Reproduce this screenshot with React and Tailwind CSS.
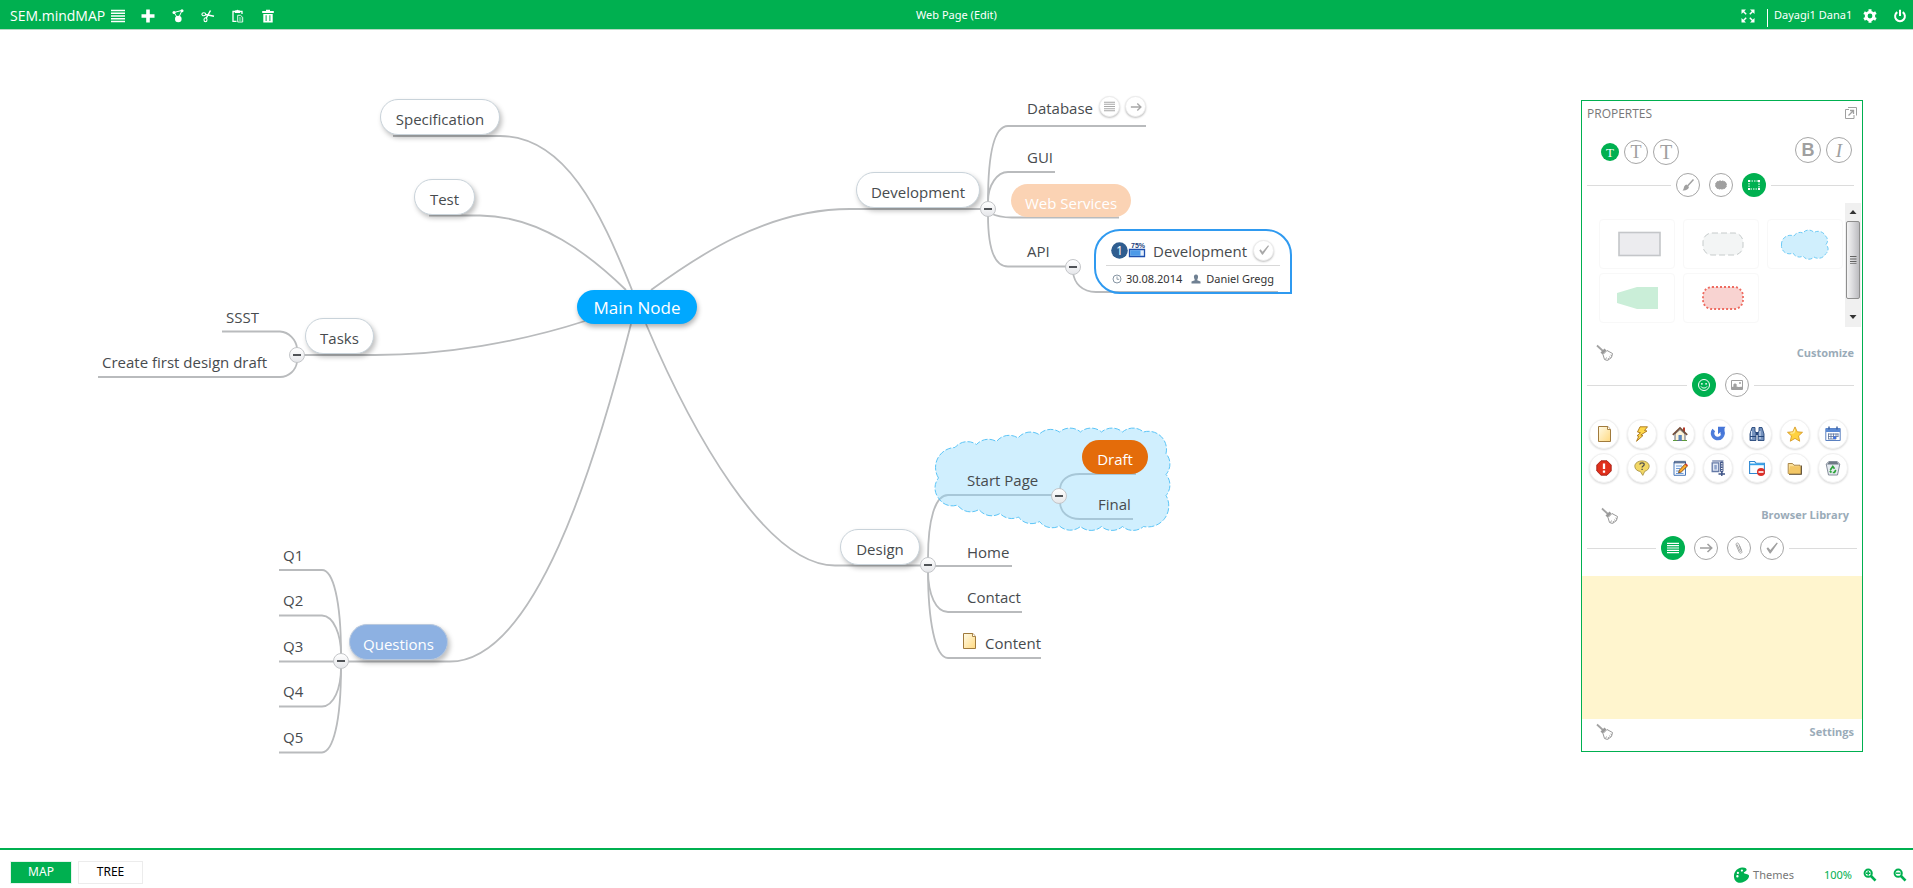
import React from "react";

const HEADER = 30;

/* ---------- map data ---------- */

const links = [
  "M393 136H500C565 136 600 210 632 290",
  "M429 215.500H480C540 216 590 255 626 290",
  "M651 290C695 258 765 209 850 209H988",
  "M585 321C520 342 445 355 375 355H297",
  "M631 324C595 465 535 661.500 450 661.500H279",
  "M646 324C690 428 765 565.500 835 565.500H928",
  "M988 202C988 150 995 126 1008 126H1146",
  "M988 202C988 185 997 172 1008 172H1055",
  "M990 213C998 217 1005 217.500 1012 217.500H1119",
  "M988 215C988 250 995 266.500 1008 266.500H1073",
  "M1073 272C1074 283 1082 292 1096 292H1278",
  "M928 558C928 520 935 495 948 495H1059",
  "M928 566H1012",
  "M928 570C928 595 936 612 948 612H1022",
  "M928 570C928 620 935 658 948 658H1041",
  "M1060 490C1060 480 1068 474 1080 474H1136",
  "M1060 502C1060 512 1068 519 1080 519H1133",
  "M222 331.500H280C289 332 296 340 297 348",
  "M98 377H280C289 377 296 370 297 362",
  "M279 570H322C333 570 341 600 341 654",
  "M279 615.500H322C334 616 341 635 341 654",
  "M279 706.500H322C334 706 341 688 341 668",
  "M279 752.500H322C333 752 341 722 341 668",
];

const cloud =
  "M938.500 478A20 20 0 0 1 955 447.500A16 16 0 0 1 976.500 444.500A16 16 0 0 1 996.500 441.500A16 16 0 0 1 1018 438A16 16 0 0 1 1039 434.500A16 16 0 0 1 1059.500 432A16 16 0 0 1 1080.500 432A16 16 0 0 1 1101.500 432A16 16 0 0 1 1122.500 432A16 16 0 0 1 1143.500 432A18 18 0 0 1 1166 453.500A16 16 0 0 1 1166 474.500A16 16 0 0 1 1166 495.500A21 21 0 0 1 1143.500 526.500A16 16 0 0 1 1122.500 526.500A16 16 0 0 1 1101.500 526.500A16 16 0 0 1 1080.500 526.500A16 16 0 0 1 1059.500 526A16 16 0 0 1 1039.500 521.500A16 16 0 0 1 1018.500 517A16 16 0 0 1 1000 513.500A16 16 0 0 1 979 509.500A16 16 0 0 1 957.500 505A16 16 0 0 1 938.500 498A16 16 0 0 1 938.500 478Z";

const pills = [
  { t: "Specification", x: 380, y: 99, w: 120, k: "white" },
  { t: "Test", x: 414, y: 179, w: 61, k: "white" },
  { t: "Tasks", x: 305, y: 318, w: 69, k: "white" },
  { t: "Development", x: 856, y: 172, w: 124, k: "white" },
  { t: "Design", x: 840, y: 529, w: 80, k: "white" },
  { t: "Questions", x: 349, y: 624, w: 99, k: "blue" },
  { t: "Main Node", x: 577, y: 290, w: 120, k: "main" },
  { t: "Web Services", x: 1011, y: 184, w: 120, k: "peach" },
  { t: "Draft", x: 1082, y: 440, w: 66, k: "orange" },
];

const pillStyles = {
  white:
    "h-[36px] pt-1 bg-white text-[#474b4e] border border-[#c9d3da] shadow-[2px_3px_5px_rgba(0,0,0,0.25)] text-[15px]",
  blue: "h-[36px] pt-1 bg-[#8db1e2] text-white border border-[#b9c9de] shadow-[2px_3px_5px_rgba(0,0,0,0.25)] text-[15px]",
  main: "h-[34px] pt-[2px] bg-[#00a8ff] text-white shadow-[1px_3px_5px_rgba(0,0,0,0.3)] text-[17px]",
  peach: "h-[33px] pt-[6px] bg-[#fbd3b4] text-white text-[15px]",
  orange: "h-[34px] pt-1 bg-[#e46c0a] text-white text-[15px]",
};

const labels = [
  { t: "Database", x: 1027, y: 108 },
  { t: "GUI", x: 1027, y: 157 },
  { t: "API", x: 1027, y: 251 },
  { t: "Start Page", x: 967, y: 480 },
  { t: "Final", x: 1098, y: 504 },
  { t: "Home", x: 967, y: 552 },
  { t: "Contact", x: 967, y: 597 },
  { t: "Content", x: 985, y: 643 },
  { t: "SSST", x: 226, y: 317 },
  { t: "Create first design draft", x: 102, y: 362 },
  { t: "Q1", x: 283, y: 555 },
  { t: "Q2", x: 283, y: 600 },
  { t: "Q3", x: 283, y: 646 },
  { t: "Q4", x: 283, y: 691 },
  { t: "Q5", x: 283, y: 737 },
];

const toggles = [
  { n: "Development", x: 988, y: 209 },
  { n: "API", x: 1073, y: 267 },
  { n: "Design", x: 928, y: 565 },
  { n: "Start Page", x: 1059, y: 496 },
  { n: "Tasks", x: 297, y: 355 },
  { n: "Questions", x: 341, y: 661 },
];

/* ---------- simple icons ---------- */

function Svg({ s = 16, box = 16, children }) {
  return (
    <svg width={s} height={s} viewBox={`0 0 ${box} ${box}`} fill="none" aria-hidden="true" className="block shrink-0">
      {children}
    </svg>
  );
}

const Lines = ({ s = 14 }) => (
  <Svg s={s} box={14}>
    <path d="M0 1.500H14M0 4.200H14M0 7H14M0 9.800H14M0 12.500H14" stroke="currentColor" strokeWidth="1.400" />
  </Svg>
);
const Arrow = ({ s = 14 }) => (
  <Svg s={s} box={14}>
    <path d="M1 7H12.500M8.500 3L12.700 7L8.500 11" stroke="currentColor" strokeWidth="1.600" />
  </Svg>
);
const Check = ({ s = 14 }) => (
  <Svg s={s} box={14}>
    <path d="M1.500 7.500L3 6.200L5.300 9L11.800 1.500L12.800 2.200L5.600 12.500H4.800Z" fill="currentColor" />
  </Svg>
);
const PlusIcon = () => (
  <Svg s={14} box={14}>
    <path d="M5.200 0.500H8.800V5.200H13.500V8.800H8.800V13.500H5.200V8.800H0.500V5.200H5.200Z" fill="currentColor" />
  </Svg>
);
const Branch = () => (
  <Svg s={14} box={14}>
    <path d="M3 3.500L7 9.500M3 3.500L10.500 1.500" stroke="currentColor" strokeWidth="1" />
    <circle cx="3" cy="3.500" r="1.500" fill="currentColor" />
    <circle cx="11" cy="1.700" r="1.500" fill="currentColor" />
    <circle cx="7.300" cy="10" r="3.300" fill="currentColor" />
    <path d="M8 8L10.800 2" stroke="currentColor" strokeWidth="1" />
  </Svg>
);
const Scissors = () => (
  <Svg s={14} box={14}>
    <path d="M4.500 5.500L13 7.200M5 9.500L9.500 1.500" stroke="currentColor" strokeWidth="1.500" />
    <ellipse cx="2.800" cy="5.300" rx="1.900" ry="1.500" stroke="currentColor" strokeWidth="1.100" />
    <ellipse cx="4.500" cy="10.800" rx="1.500" ry="2" stroke="currentColor" strokeWidth="1.100" />
  </Svg>
);
const Paste = () => (
  <Svg s={14} box={14}>
    <path d="M5.500 12.300H2V2.500H11V5" stroke="currentColor" strokeWidth="1.300" />
    <path d="M4 1.500H5.300A1.300 1.300 0 0 1 7.700 1.500H9V4H4Z" fill="currentColor" />
    <path d="M6.700 6.300H9.500L11.700 8.300V13H6.700Z" stroke="currentColor" strokeWidth="0.900" />
    <path d="M8 9H10.500M8 11H10.500" stroke="currentColor" strokeWidth="0.700" />
  </Svg>
);
const Trash = () => (
  <Svg s={14} box={14}>
    <path d="M1.200 2H5V0.800H9V2H12.800V4H1.200Z" fill="currentColor" />
    <path fillRule="evenodd" d="M2.300 5H11.700V13.500H2.300ZM4.600 6.300V12H5.600V6.300ZM8.400 6.300V12H9.400V6.300Z" fill="currentColor" />
  </Svg>
);
const Expand = () => (
  <Svg s={14} box={14}>
    <path d="M0.500 0.500H5L0.500 5ZM13.500 0.500V5L9 0.500ZM0.500 13.500V9L5 13.500ZM13.500 13.500H9L13.500 9Z" fill="currentColor" />
    <path d="M2 2L5.200 5.200M12 2L8.800 5.200M2 12L5.200 8.800M12 12L8.800 8.800" stroke="currentColor" strokeWidth="1.500" />
  </Svg>
);
const Gear = () => (
  <Svg s={14} box={14}>
    <circle cx="7" cy="7" r="3.800" stroke="currentColor" strokeWidth="2.800" />
    <path
      d="M7 0.200V2.400M7 11.600V13.800M1.100 3.600L3 4.700M11 9.300L12.900 10.400M1.100 10.400L3 9.300M11 4.700L12.900 3.600"
      stroke="currentColor"
      strokeWidth="3"
    />
  </Svg>
);
const Power = () => (
  <Svg s={14} box={14}>
    <path d="M4.300 3.200A4.900 4.900 0 1 0 9.700 3.200M7 0.800V7" stroke="currentColor" strokeWidth="2" />
  </Svg>
);
const Broom = () => (
  <Svg s={18} box={18}>
    <path d="M1 1.500L8 8" stroke="#a3a3a3" strokeWidth="1.800" />
    <path d="M4.500 8.500L8.500 4.500L10.500 6.500L6.500 10.500Z" fill="#999" />
    <path d="M7 10.500L11 6.500L16.500 9.500L15.500 13.500L11.500 16.500L8.500 15.500Z" stroke="#999" strokeWidth="1" />
    <path d="M9.500 15.500L10.500 13.500M12 16L12.500 14M14.500 14.200L13.500 12.500M16 12L14.500 11" stroke="#999" strokeWidth="0.900" />
  </Svg>
);
const Palette = () => (
  <Svg s={18} box={18}>
    <path
      fillRule="evenodd"
      d="M2 9C2.500 5 6 1.800 10 1.500C13 1.200 15.200 2.500 14.600 4.200C14 5.600 11.600 5.800 11.800 7C12 8.200 16.500 7.500 17 9.600C17.500 12.600 13.500 16.500 8.500 16.800C4 17 1.500 13.600 2 9ZM4.200 10.300A1.200 1.200 0 1 0 6.600 10.300A1.200 1.200 0 1 0 4.200 10.300ZM4.800 6.900A1.100 1.100 0 1 0 7 6.900A1.100 1.100 0 1 0 4.800 6.900ZM8.800 4.600A1.100 1.100 0 1 0 11 4.600A1.100 1.100 0 1 0 8.800 4.600Z"
      fill="currentColor"
    />
  </Svg>
);
const Zoom = ({ plus }) => (
  <Svg s={14} box={14}>
    <circle cx="5.200" cy="5.200" r="3.600" stroke="currentColor" strokeWidth="2" />
    <path d="M8 8L12.500 12.700" stroke="currentColor" strokeWidth="2.600" />
    <path d={plus ? "M3 5.200H7.400M5.200 3V7.400" : "M3 5.200H7.400"} stroke="currentColor" strokeWidth="1.400" />
  </Svg>
);
const Doc = () => (
  <Svg>
    <defs>
      <linearGradient id="docFill" x1="0" y1="0" x2="1" y2="1">
        <stop offset="0" stopColor="#fffbe8" />
        <stop offset="1" stopColor="#ffd980" />
      </linearGradient>
    </defs>
    <path d="M2.500 0.500H12L14.500 3.500V15.500H2.500Z" fill="url(#docFill)" stroke="#a07a3c" />
    <path d="M11.500 0.500V3.500H14.500" fill="#fff" stroke="#a07a3c" strokeWidth="0.900" />
  </Svg>
);

/* ---------- icon library ---------- */

const library = [
  ["Document", <Doc />],
  [
    "Lightning",
    <Svg>
      <path d="M6 0.800L13.500 0.800L10.500 4.500L13 5L6.800 9L9 9.500L2.500 15.300L4.800 10.200L3 9.800L6.500 6.800L3.500 6Z" fill="#ffd84a" stroke="#a8741a" strokeWidth="0.900" />
    </Svg>,
  ],
  [
    "Home",
    <Svg>
      <path d="M11 1.500H13V6H11Z" fill="#b33a2a" />
      <path d="M3 8L8 3.500L13 8V14.500H3Z" fill="#fff4d8" stroke="#4f5a70" strokeWidth="0.900" />
      <path d="M0.800 8.800L8 2L15.200 8.800" stroke="#76503a" strokeWidth="1.700" />
      <path d="M6.500 9H9.800V14.500H6.500Z" fill="#5c86bd" />
      <path d="M10 14.500H15M1 14.500H5" stroke="#5d9b3c" strokeWidth="1.200" />
    </Svg>,
  ],
  [
    "Redo",
    <Svg>
      <path d="M3.800 4A5.200 5.200 0 1 0 12.800 6" stroke="#4d7ddb" strokeWidth="3.500" />
      <path d="M8 0.800H15.500L14.500 2.300V8.500H10.500V6L8 8.200V3.500Z" fill="#4676d8" />
    </Svg>,
  ],
  [
    "Find",
    <Svg>
      <path d="M3 1.500H6V5L7 7.500V14.500H1V8Z" fill="#7592bd" stroke="#26477c" strokeWidth="0.900" />
      <path d="M10 1.500H13L15 8V14.500H9V7.500L10 5Z" fill="#7592bd" stroke="#26477c" strokeWidth="0.900" />
      <path d="M7 6H9V9H7Z" fill="#26477c" />
      <path d="M2.500 5V13M11 5V13" stroke="#d4e2f5" strokeWidth="1.100" />
      <path d="M1 10.500H7M9 10.500H15" stroke="#26477c" />
    </Svg>,
  ],
  [
    "Star",
    <Svg>
      <path d="M8 0.900L10.200 5.800L15.500 6.300L11.500 9.900L12.700 15.200L8 12.400L3.300 15.200L4.500 9.900L0.500 6.300L5.800 5.800Z" fill="#ffd23f" stroke="#d89c28" strokeWidth="0.900" />
      <path d="M7.800 3.500L6.800 6.800L3.500 7.200" stroke="#fff0a8" strokeWidth="1.200" />
    </Svg>,
  ],
  [
    "Calendar",
    <Svg>
      <path d="M0.800 2.500H15.200V14.500H0.800Z" fill="#fff" stroke="#5a80c0" strokeWidth="1" />
      <path d="M1 2.500H15V6H1Z" fill="#5b8ad4" />
      <path d="M4 0.500V3.500M12 0.500V3.500" stroke="#3a5f9e" strokeWidth="1.400" />
      <path d="M3 8H13.500M3 10.500H13.500M3 13H11M3.500 7.500V13M6 7.500V13M8.500 7.500V13M11 7.500V13M13 7.500V10.500" stroke="#59719c" strokeWidth="0.800" />
      <path d="M8.500 10.500H11V13H8.500Z" fill="#3f73e6" />
    </Svg>,
  ],
  [
    "Alert",
    <Svg>
      <path d="M5 0.800H11L15.200 5V11L11 15.200H5L0.800 11V5Z" fill="#e0301c" stroke="#a31f14" strokeWidth="0.900" />
      <path d="M8 3.500V9M8 10.500V12.700" stroke="#fff" strokeWidth="2.300" />
    </Svg>,
  ],
  [
    "Question",
    <Svg>
      <path d="M8 0.900C12 0.900 15.200 3.200 15.200 6.200C15.200 9 12.800 10.800 10.800 11.300L8.800 15.400L6.300 11.500C3 11 0.800 9 0.800 6.200C0.800 3.200 4 0.900 8 0.900Z" fill="#f2d765" stroke="#a18a3c" strokeWidth="0.800" />
      <path d="M5.800 4.500C6 2.200 10.300 2.200 10.200 4.600C10.200 6 8.100 6.100 8.100 7.600M8.100 8.700V10" stroke="#4d4d4d" strokeWidth="1.300" />
    </Svg>,
  ],
  [
    "Notepad",
    <Svg>
      <path d="M2 2H13.500V15.300H2Z" fill="#f4f9ff" stroke="#4b78b8" />
      <path d="M3 0.800V3.500M5 0.800V3.500M7 0.800V3.500M9 0.800V3.500M11 0.800V3.500M13 0.800V3.500" stroke="#22365c" strokeWidth="1" />
      <path d="M4 6H10M4 8.500H8M4 11H7M4 13.500H11.500" stroke="#6f9cd8" />
      <path d="M6.500 12.800L7.500 10L13 4.200L15.300 6.200L9.300 12Z" fill="#ffae2b" stroke="#7a4715" strokeWidth="0.900" />
      <path d="M13 4.200L14 3.200L16 5.200L15.300 6.200Z" fill="#e33c2e" />
    </Svg>,
  ],
  [
    "Archive",
    <Svg>
      <path d="M2.200 2.800H8.800V11.500H2.200Z" fill="#dfe6f3" stroke="#6479a6" strokeWidth="1.300" />
      <path d="M2.200 1H13.500" stroke="#6479a6" strokeWidth="1.200" />
      <path d="M4.300 5H6.800V9.500H4.300Z" fill="#8ea3cb" />
      <path d="M10.500 2V11.500H13V2Z" fill="#fff" stroke="#3e5487" strokeWidth="0.900" />
      <path d="M11.800 2V14" stroke="#3e5487" strokeWidth="1.800" strokeDasharray="1.300 1" />
      <path d="M8.500 14H15M11.800 12V16" stroke="#3e5487" strokeWidth="1.400" />
    </Svg>,
  ],
  [
    "Remove folder",
    <Svg>
      <path d="M0.600 13.500V1.500H5.500L7 3.200H15.400V13.500Z" fill="#fafdff" stroke="#2f86d0" strokeWidth="1.100" />
      <path d="M0.600 3.500H15.400V5.200H0.600Z" fill="#33a0e8" />
      <circle cx="12" cy="12" r="4" fill="#dd2f28" />
      <path d="M9.500 12H14.500" stroke="#fff" strokeWidth="1.600" />
    </Svg>,
  ],
  [
    "Folder",
    <Svg>
      <path d="M1.200 3.500H5.500L7 5.200H13V13.500H1.200Z" fill="#fbe09a" stroke="#a07a3c" strokeWidth="0.900" />
      <path d="M3 6.200H14V14H1.500Z" fill="#f3c766" />
      <path d="M14.300 5.500V14.300H2" stroke="#4e3c20" strokeWidth="1.100" />
    </Svg>,
  ],
  [
    "Recycle",
    <Svg>
      <path d="M1.200 4L4 1.500H12L14.800 4L12.500 15H3.500Z" fill="#e6ebf1" stroke="#77818e" strokeWidth="0.900" />
      <path d="M2 4.500H14L12 2H4Z" fill="#6e7986" />
      <path d="M5.300 10L7.800 6.500L9.500 8.800M10.800 10L9.500 12.500H7.800M6.500 12.500L4.800 11" stroke="#2da33b" strokeWidth="1.700" />
    </Svg>,
  ],
];

/* ---------- shape previews ---------- */

const shapes = [
  [
    "Rectangle",
    <svg key="a" width="50" height="34" viewBox="0 0 50 34" aria-hidden="true">
      <rect x="7" y="5.500" width="41" height="23" fill="#ececef" stroke="#c4c6c9" strokeWidth="1.600" />
    </svg>,
  ],
  [
    "Rounded",
    <svg key="b" width="50" height="34" viewBox="0 0 50 34" aria-hidden="true">
      <rect x="7" y="6" width="40" height="22" rx="9" fill="#f3f5f5" stroke="#c6cbcb" strokeDasharray="6 3" />
    </svg>,
  ],
  [
    "Cloud",
    <svg key="c" width="50" height="34" viewBox="0 0 50 34" aria-hidden="true">
      <path
        d="M1.500 18A9 9 0 0 1 14 9A7 7 0 0 1 23 6A7 7 0 0 1 34 5.500A8 8 0 0 1 45.500 9A6 6 0 0 1 46 17.500A6 6 0 0 1 45.500 27A8 8 0 0 1 34 30A7 7 0 0 1 23 29A7 7 0 0 1 13 26A8 8 0 0 1 1.500 18Z"
        fill="#d0effd"
        stroke="#6fcbf5"
        strokeDasharray="4 2"
      />
    </svg>,
  ],
  [
    "Tag",
    <svg key="d" width="50" height="34" viewBox="0 0 50 34" aria-hidden="true">
      <path d="M5 12L25 6H46V28H25L5 22Z" fill="#caeed8" />
    </svg>,
  ],
  [
    "Dotted",
    <svg key="e" width="50" height="34" viewBox="0 0 50 34" aria-hidden="true">
      <rect x="7" y="6" width="40" height="22" rx="9" fill="#f8d3d1" stroke="#ee6b60" strokeWidth="1.800" strokeDasharray="2 2" />
    </svg>,
  ],
];

/* ---------- panel pieces ---------- */

function Round({ label, active, size = "size-6", children }) {
  return (
    <button
      aria-label={label}
      className={`${size} flex shrink-0 items-center justify-center rounded-full ${
        active ? "bg-[#00b050] text-white" : "border border-[#a6a6a6] bg-white text-[#a0a0a0]"
      }`}
    >
      {children}
    </button>
  );
}

function TabRow({ children, className = "pr-[8px]" }) {
  return (
    <div className={`flex h-6 items-center gap-[5px] pl-[5px] ${className}`}>
      <hr className="flex-1 border-[#dcdcdc]" />
      <div className="flex gap-[9px]">{children}</div>
      <hr className="flex-1 border-[#dcdcdc]" />
    </div>
  );
}

function SectionEnd({ children, className }) {
  return (
    <div className={`flex items-center justify-between ${className}`}>
      <button aria-label={`Clear ${children}`}>
        <Broom />
      </button>
      <a href="#" className="font-['Open_Sans',sans-serif] text-[11px] font-bold text-[#9aabb8]">
        {children}
      </a>
    </div>
  );
}

function Properties() {
  return (
    <aside className="z-10 col-start-1 row-start-1 mr-[50px] mt-[70px] w-[282px] self-start justify-self-end border border-[#00b050] bg-white">
      <div className="flex h-6 items-center justify-between px-[5px] text-[#a0a0a0]">
        <h2 className="pt-[2px] text-[12px] text-[#777] font-['Open_Sans',sans-serif]">PROPERTES</h2>
        <button aria-label="Detach panel">
          <Svg s={12} box={12}>
            <path d="M4 2.500H0.500V11.500H9V8" stroke="currentColor" />
            <path d="M3 0.500H11.500V8.500" stroke="currentColor" />
            <path d="M3.500 8.500L8 4M5 3.500H8.500V7" stroke="currentColor" strokeWidth="1.300" />
          </Svg>
        </button>
      </div>

      <div className="flex h-[48px] items-center pl-[19px] pr-[10px] pt-[2px]">
        <div className="flex items-center gap-[5px] pt-1 font-['Liberation_Serif',serif]">
          <Round label="Small text" active size="size-[18px]">
            <span className="text-[13px] leading-none">T</span>
          </Round>
          <Round label="Medium text">
            <span className="text-[18px] leading-none">T</span>
          </Round>
          <Round label="Large text" size="size-[26px]">
            <span className="text-[20px] leading-none">T</span>
          </Round>
        </div>
        <div className="ml-auto flex gap-[5px]">
          <Round label="Bold" size="size-[26px]">
            <span className="font-['Liberation_Sans',sans-serif] text-[18px] font-bold leading-none">B</span>
          </Round>
          <Round label="Italic" size="size-[26px]">
            <span className="font-['Liberation_Serif',serif] text-[19px] italic leading-none">I</span>
          </Round>
        </div>
      </div>

      <TabRow>
        <Round label="Brush">
          <Svg s={14} box={14}>
            <path d="M12.500 1.500L6.500 8" stroke="currentColor" strokeWidth="1.500" />
            <path d="M5.500 6.500L8 9C7.500 11.500 4.500 13 1.500 12.500C3 11.500 2.500 10 3.300 8.300C3.800 7.300 4.500 6.800 5.500 6.500Z" fill="currentColor" />
          </Svg>
        </Round>
        <Round label="Node shape">
          <Svg s={14} box={14}>
            <rect x="1.500" y="3" width="11" height="8" rx="4" fill="currentColor" stroke="currentColor" strokeDasharray="1.500 1" />
          </Svg>
        </Round>
        <Round label="Boundary" active>
          <Svg s={14} box={14}>
            <path d="M2 3H12V11H2Z" stroke="currentColor" strokeDasharray="1.500 1" />
            <path d="M1 2H3V4H1ZM11 2H13V4H11ZM1 10H3V12H1ZM11 10H13V12H11Z" fill="currentColor" />
          </Svg>
        </Round>
      </TabRow>

      <div className="mt-1.5 flex h-[124px] justify-between pl-[17px] pr-px">
        <div className="grid grid-cols-3 content-center gap-x-2 gap-y-1 pt-3">
          {shapes.map(([name, art]) => (
            <button
              key={name}
              aria-label={name}
              className="flex h-[50px] w-[76px] items-center justify-center rounded-sm border border-[#f8f8f8]"
            >
              {art}
            </button>
          ))}
        </div>
        <div className="flex w-4 flex-col items-center bg-[#f0f0f0]" aria-hidden="true">
          <span className="flex h-[18px] items-center">
            <Svg s={8} box={8}>
              <path d="M0.500 6L4 2L7.500 6Z" fill="#333" />
            </Svg>
          </span>
          <span className="flex w-[14px] flex-1 items-center justify-center rounded-xs border border-[#8e8e8e] bg-linear-to-r from-[#f4f4f4] via-[#d9d9dc] to-[#bcbcc0]">
            <Svg s={8} box={8}>
              <path d="M1 0.500H7.500M1 3H7.500M1 5.500H7.500M1 7.800H7.500" stroke="#555" strokeWidth="0.900" />
            </Svg>
          </span>
          <span className="flex h-[28px] items-center pt-2">
            <Svg s={8} box={8}>
              <path d="M0.500 2L4 6L7.500 2Z" fill="#333" />
            </Svg>
          </span>
        </div>
      </div>

      <SectionEnd className="h-[46px] pl-[14px] pr-2 pt-1.5">Customize</SectionEnd>

      <TabRow>
        <Round label="Icons" active>
          <Svg s={14} box={14}>
            <circle cx="7" cy="7" r="5.500" stroke="currentColor" />
            <circle cx="4.900" cy="5.800" r="0.900" fill="currentColor" />
            <circle cx="9.100" cy="5.800" r="0.900" fill="currentColor" />
            <path d="M4 8.500C5 10.500 9 10.500 10 8.500" stroke="currentColor" />
          </Svg>
        </Round>
        <Round label="Images">
          <Svg s={14} box={14}>
            <path d="M1.500 2.500H12.500V11.500H1.500Z" stroke="currentColor" />
            <path d="M2 11V9L3.500 8.500L3.300 6.500L5 5.200L6.800 6.500L6.500 8.500L8.500 9L12 8.800V11Z" fill="currentColor" />
            <path d="M9 5H11" stroke="currentColor" strokeWidth="1.500" />
          </Svg>
        </Round>
      </TabRow>

      <div className="mt-[22px] grid grid-cols-7 gap-x-2 gap-y-1 pl-[7px] pr-[14px]">
        {library.map(([name, art]) => (
          <button
            key={name}
            aria-label={name}
            className="flex size-[30px] items-center justify-center rounded-full border border-[#f1f1f1] bg-white shadow-[0_1px_2px_rgba(0,0,0,0.15)]"
          >
            {art}
          </button>
        ))}
      </div>

      <SectionEnd className="h-[53px] pl-[19px] pr-[13px] pt-3">Browser Library</SectionEnd>

      <TabRow className="pr-[5px]">
        <Round label="Notes" active>
          <Lines s={12} />
        </Round>
        <Round label="Link">
          <Arrow />
        </Round>
        <Round label="Attachment">
          <Svg s={14} box={14}>
            <path d="M5 3.500L8.500 11M9.500 9.500L6.800 3C6 1.200 3.500 2 4.200 4L7.200 11.200C8 13 10.500 12.200 9.800 10.300L7.500 4.800" stroke="currentColor" strokeWidth="0.900" />
          </Svg>
        </Round>
        <Round label="Task">
          <Check />
        </Round>
      </TabRow>

      <textarea aria-label="Notes" className="mt-4 block h-[143px] w-full resize-none bg-[#fff5ce] p-2 text-[12px] outline-none" />
      <SectionEnd className="h-8 pb-1.5 pl-[14px] pr-2">Settings</SectionEnd>
    </aside>
  );
}

/* ---------- map ---------- */

function NodeBadge({ label, className = "", children }) {
  return (
    <button
      aria-label={label}
      className={`flex size-[21px] items-center justify-center rounded-full border border-[#ececec] bg-white text-[#a8a8a8] shadow-[0_1px_2px_rgba(0,0,0,0.25)] ${className}`}
    >
      {children}
    </button>
  );
}

function MindMap() {
  return (
    <div className="relative col-start-1 row-start-1 overflow-hidden font-['Open_Sans','Noto_Sans',sans-serif] text-[15px] text-[#474b4e]">
      <svg className="absolute left-0 top-0" width="1400" height="800" viewBox="0 30 1400 800" fill="none" aria-hidden="true">
        {links.map((d) => (
          <path key={d} d={d} stroke="#b9bbbd" strokeWidth="1.800" />
        ))}
        <path d={cloud} fill="#8fdafd" fillOpacity="0.420" stroke="#5cc5f7" strokeDasharray="6 2" />
      </svg>

      {pills.map((p) => (
        <button
          key={p.t + p.x}
          className={`absolute flex items-center justify-center whitespace-nowrap rounded-full ${pillStyles[p.k]}`}
          style={{ left: p.x, top: p.y - HEADER, width: p.w }}
        >
          {p.t}
        </button>
      ))}

      {labels.map((l) => (
        <button
          key={l.t}
          className="absolute h-6 whitespace-nowrap leading-6"
          style={{ left: l.x, top: l.y - HEADER - 12 }}
        >
          {l.t}
        </button>
      ))}

      <div className="absolute left-[1099px] top-[66px] flex gap-[5px]">
        <NodeBadge label="Notes">
          <Lines s={11} />
        </NodeBadge>
        <NodeBadge label="Link">
          <Arrow s={12} />
        </NodeBadge>
      </div>

      <div className="absolute left-[961px] top-[603px]">
        <Doc />
      </div>

      <div className="absolute left-[1094px] top-[199px] w-[198px] rounded-[26px] rounded-br-none border-2 border-[#2f9af0] px-[10px]">
        <div className="flex h-[35px] items-center border-b border-[#d8d8d8] pl-[5px] pr-[6px] pt-1">
          <Svg s={17} box={16}>
            <circle cx="8" cy="8" r="7.800" fill="#2f5d8f" />
            <text x="8" y="12" textAnchor="middle" fontSize="11" fill="#fff" fontFamily="Noto Sans, sans-serif">
              1
            </text>
          </Svg>
          <Svg s={18} box={18}>
            <text x="10" y="7" textAnchor="middle" fontSize="7" fontWeight="bold" fill="#1d3f7c" fontFamily="Liberation Sans, sans-serif">
              75%
            </text>
            <path d="M1.500 8.500H16.500V15.500H1.500Z" fill="#e4effb" stroke="#1d4fae" strokeWidth="1.300" />
            <path d="M2.200 9.200H12.500V14.800H2.200Z" fill="#4d9ae8" />
          </Svg>
          <button className="ml-[7px] pt-[2px]">Development</button>
          <NodeBadge label="Task done" className="ml-auto">
            <Check s={12} />
          </NodeBadge>
        </div>
        <div className="flex h-[26px] items-center pl-[6px] pr-[6px] font-['Noto_Sans',sans-serif] text-[11px] text-[#333]">
          <Svg s={10} box={10}>
            <circle cx="5" cy="5" r="4" stroke="#8795a3" />
            <path d="M5 2.500V5.300H7.200" stroke="#8795a3" strokeWidth="0.900" />
          </Svg>
          <span className="ml-[4px]">30.08.2014</span>
          <span className="ml-auto">
            <Svg s={10} box={10}>
              <path d="M5 0.500C6.800 0.500 7.300 2 7 3.600C6.800 4.800 6.300 5.300 6.200 6.200L9.500 7.500V9.500H0.500V7.500L3.800 6.200C3.700 5.300 3.200 4.800 3 3.600C2.700 2 3.200 0.500 5 0.500Z" fill="#6f8092" />
            </Svg>
          </span>
          <span className="ml-[5px]">Daniel Gregg</span>
        </div>
      </div>

      {toggles.map((t) => (
        <button
          key={t.n}
          aria-label={`Collapse ${t.n}`}
          className="absolute flex size-4 items-center justify-center rounded-full border border-[#c4c6c9] bg-linear-to-b from-white to-[#e6e7ea]"
          style={{ left: t.x - 8, top: t.y - HEADER - 8 }}
        >
          <span className="h-[2px] w-2 bg-[#505357]" />
        </button>
      ))}
    </div>
  );
}

/* ---------- page ---------- */

const tools = [
  ["Menu", <Lines />],
  ["Add", <PlusIcon />],
  ["Branch", <Branch />],
  ["Cut", <Scissors />],
  ["Paste", <Paste />],
  ["Delete", <Trash />],
];

export default function App() {
  return (
    <div className="flex h-screen flex-col bg-white font-['Noto_Sans','Open_Sans',sans-serif]">
      <header className="grid h-[30px] shrink-0 grid-cols-[1fr_auto_1fr] items-center border-b border-[#b5d9c4] bg-[#00b050] text-white">
        <div className="flex items-center pl-[10px] pt-[2px]">
          <h1 className="w-[101px] whitespace-nowrap font-['Open_Sans',sans-serif] text-[14px] leading-5">SEM.mindMAP</h1>
          <div className="flex gap-4">
            {tools.map(([name, art]) => (
              <button key={name} aria-label={name}>
                {art}
              </button>
            ))}
          </div>
        </div>
        <div className="pt-[2px] text-[11px]">Web Page (Edit)</div>
        <div className="flex items-center justify-end pr-[6px] pt-[2px] text-[11px]">
          <button aria-label="Full screen">
            <Expand />
          </button>
          <span className="ml-3 mr-[6px] mt-1 h-[18px] w-px bg-white" />
          <a href="#" className="w-[78px] whitespace-nowrap">
            Dayagi1 Dana1
          </a>
          <button aria-label="Settings" className="ml-[11px]">
            <Gear />
          </button>
          <button aria-label="Log out" className="ml-4">
            <Power />
          </button>
        </div>
      </header>

      <main className="grid min-h-0 flex-1">
        <MindMap />
        <Properties />
      </main>

      <footer className="flex h-[40px] shrink-0 items-center justify-between border-t-2 border-[#00b050] pl-[10px] pr-[6px] pt-[6px] text-[12px]">
        <div className="flex gap-[6px]">
          <button className="h-[23px] w-[62px] border border-[#e4f4eb] bg-[#00b050] text-white">MAP</button>
          <button className="h-[23px] w-[65px] border border-[#ececec] bg-white text-black">TREE</button>
        </div>
        <div className="flex items-center pt-[6px] text-[#00b050]">
          <button className="flex items-center gap-[3px] text-[11px]">
            <Palette />
            <span className="text-[#777]">Themes</span>
          </button>
          <span className="ml-[30px] text-[11px]">100%</span>
          <button aria-label="Zoom in" className="ml-[11px]">
            <Zoom plus />
          </button>
          <button aria-label="Zoom out" className="ml-4">
            <Zoom />
          </button>
        </div>
      </footer>
    </div>
  );
}
